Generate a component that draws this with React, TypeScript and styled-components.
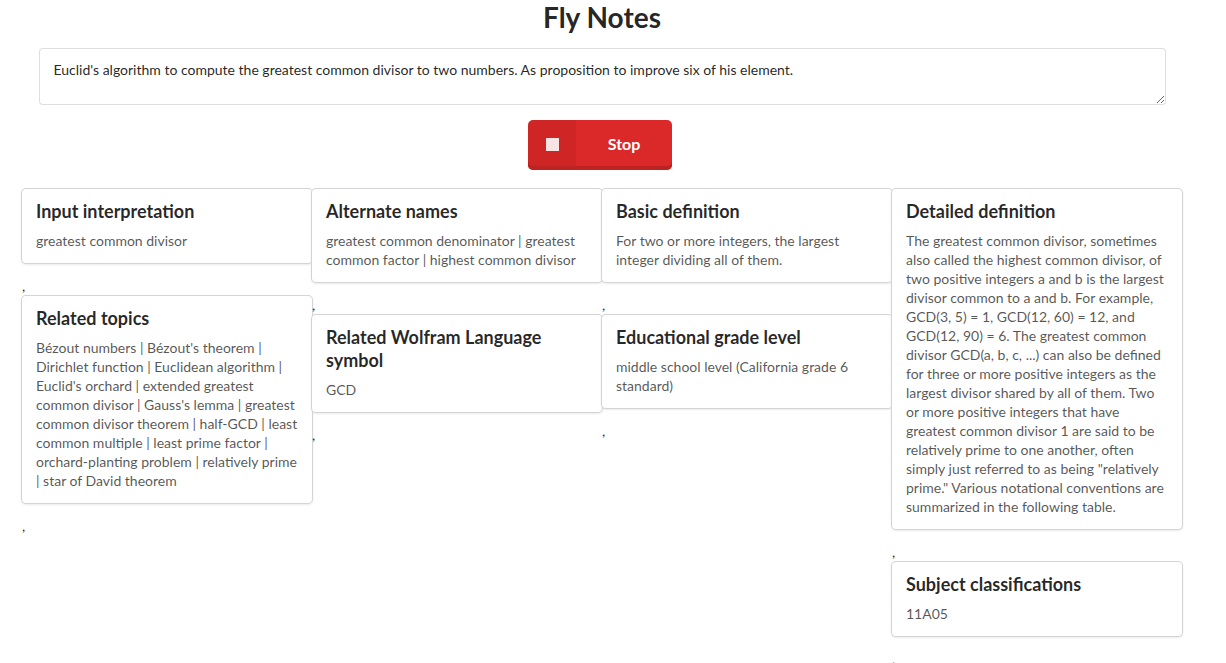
import React from "react"
import styled, { createGlobalStyle } from "styled-components"

const GlobalStyle = createGlobalStyle`
body {
    margin: 0;
    background: #fff;
    font-family: Lato, "Helvetica Neue", Arial, sans-serif;
    font-size: 14px;
    color: rgba(0, 0, 0, 0.87);
}
`

const Page = styled.div`
width: 1204px;
display: flex;
flex-direction: column;
align-items: center;
`

const Title = styled.h1`
margin: -1px 0 13px;
font-size: 28px;
line-height: 36px;
font-weight: 700;
color: rgba(0, 0, 0, 0.87);
`

const Container = styled.div`
width: 1127px;
`

const NoteInput = styled.textarea`
display: block;
box-sizing: border-box;
width: 100%;
height: 57px;
padding: 12px 14px 10px;
border: 1px solid rgba(34, 36, 38, 0.15);
border-radius: 4px;
font-family: Lato, "Helvetica Neue", Arial, sans-serif;
font-size: 14px;
line-height: 18px;
color: rgba(0, 0, 0, 0.87);
resize: vertical;
outline: none;
`

const StopBtn = styled.button`
margin: 15px 4px 0 0;
display: flex;
align-items: stretch;
width: 144px;
height: 50px;
padding: 0 0 4px;
border: 0;
border-radius: 5px;
background: #db2828;
box-shadow: inset 0 -4px 0 #bd2323;
color: #fff;
cursor: pointer;
overflow: hidden;
font-family: Lato, "Helvetica Neue", Arial, sans-serif;
`

const BtnIcon = styled.span`
width: 48px;
display: flex;
align-items: center;
justify-content: center;
background: rgba(0, 0, 0, 0.05);
&::before {
    content: "";
    width: 13px;
    height: 13px;
    margin-top: 3px;
    background: rgba(255, 255, 255, 0.88);
}
`

const BtnLabel = styled.span`
flex: 1;
display: flex;
align-items: center;
justify-content: center;
padding-top: 1px;
font-size: 16px;
font-weight: 700;
`

const Board = styled.div`
margin-top: 19px;
display: grid;
grid-template-columns: repeat(4, 290px);
align-items: start;
`

const Column = styled.div`
display: flex;
flex-direction: column;
`

const Card = styled.div`
box-sizing: border-box;
background: #fff;
border-radius: 4px;
box-shadow: 0 1px 3px 0 #d4d4d5, 0 0 0 1px #d4d4d5;
padding: 14px 14px 13px;
margin-bottom: 13px;
`

const CardHeader = styled.div`
margin-top: -3px;
font-size: 18px;
line-height: 23px;
font-weight: 700;
color: rgba(0, 0, 0, 0.85);
`

const CardText = styled.div`
margin-top: 8px;
font-size: 14px;
line-height: 19px;
color: rgba(0, 0, 0, 0.68);
`

const Sep = styled.div`
height: 20px;
line-height: 20px;
font-size: 14px;
color: rgba(0, 0, 0, 0.87);
`

type Note = { title: string; text: string }

const columns: Note[][] = [
    [
        { title: "Input interpretation", text: "greatest common divisor" },
        {
            title: "Related topics",
            text: "Bézout numbers | Bézout's theorem | Dirichlet function | Euclidean algorithm | Euclid's orchard | extended greatest common divisor | Gauss's lemma | greatest common divisor theorem | half-GCD | least common multiple | least prime factor | orchard-planting problem | relatively prime | star of David theorem",
        },
    ],
    [
        {
            title: "Alternate names",
            text: "greatest common denominator | greatest common factor | highest common divisor",
        },
        { title: "Related Wolfram Language symbol", text: "GCD" },
    ],
    [
        {
            title: "Basic definition",
            text: "For two or more integers, the largest integer dividing all of them.",
        },
        {
            title: "Educational grade level",
            text: "middle school level (California grade 6 standard)",
        },
    ],
    [
        {
            title: "Detailed definition",
            text: "The greatest common divisor, sometimes also called the highest common divisor, of two positive integers a and b is the largest divisor common to a and b. For example, GCD(3, 5) = 1, GCD(12, 60) = 12, and GCD(12, 90) = 6. The greatest common divisor GCD(a, b, c, ...) can also be defined for three or more positive integers as the largest divisor shared by all of them. Two or more positive integers that have greatest common divisor 1 are said to be relatively prime to one another, often simply just referred to as being \"relatively prime.\" Various notational conventions are summarized in the following table.",
        },
        { title: "Subject classifications", text: "11A05" },
    ],
]

const App: React.FC = () => {
    return (
        <Page>
            <GlobalStyle />
            <Title>Fly Notes</Title>
            <Container>
                <NoteInput
                    defaultValue="Euclid's algorithm to compute the greatest common divisor to two numbers. As proposition to improve six of his element."
                />
            </Container>
            <StopBtn>
                <BtnIcon />
                <BtnLabel>Stop</BtnLabel>
            </StopBtn>
            <Board>
                {columns.map((col, i) => (
                    <Column key={i}>
                        {col.map((note) => (
                            <React.Fragment key={note.title}>
                                <Card>
                                    <CardHeader>{note.title}</CardHeader>
                                    <CardText>{note.text}</CardText>
                                </Card>
                                <Sep>,</Sep>
                            </React.Fragment>
                        ))}
                    </Column>
                ))}
            </Board>
        </Page>
    )
}

export default App
